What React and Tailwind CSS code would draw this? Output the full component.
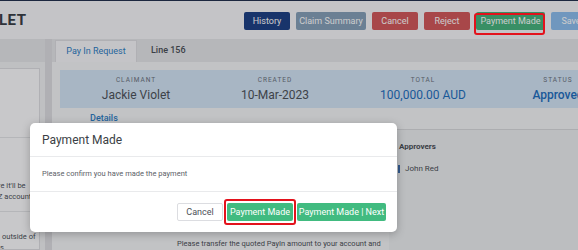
import React from "react";

const HeaderButton = ({ label, className }) => (
  <button
    className={`h-[18px] text-[9px] leading-none text-white rounded-[2px] shrink-0 whitespace-nowrap ${className}`}
  >
    {label}
  </button>
);

const Stat = ({ label, value, valueClass }) => (
  <div className="flex flex-col items-center">
    <span className="text-[6.5px] tracking-[1px] text-[#6b7280] leading-none">{label}</span>
    <span className={`mt-[6px] text-[12px] leading-none whitespace-nowrap ${valueClass}`}>{value}</span>
  </div>
);

const App = () => {
  return (
    <div
      className="relative w-[578px] h-[250px] overflow-hidden bg-[#eff0f3]"
      style={{ fontFamily: "Roboto, 'Liberation Sans', sans-serif" }}
    >
      {/* top strip */}
      <div className="h-[1px] bg-[#24314f]" />

      {/* header */}
      <div className="h-[38px] flex items-center bg-[#f5f6f9]">
        <div className="w-[245px] shrink-0 text-[15px] font-bold text-[#3a3f47] -ml-[1px] tracking-[0.5px]">LET</div>
        <div className="flex items-center gap-[6px] pt-[10px] pb-[8px] shrink-0">
          <HeaderButton label="History" className="w-[46px] bg-[#1f4286]" />
          <HeaderButton label="Claim Summary" className="w-[70px] bg-[#86a0ba]" />
          <HeaderButton label="Cancel" className="w-[46px] bg-[#d3595c]" />
          <HeaderButton label="Reject" className="w-[46px] bg-[#d3595c]" />
          <HeaderButton label="Payment Made" className="w-[69px] bg-[#48b37f]" />
          <HeaderButton label="Save" className="w-[40px] bg-[#8cbdee]" />
        </div>
      </div>

      {/* body */}
      <div className="flex h-[211px]">
        {/* left column */}
        <div className="w-[45px] shrink-0 flex flex-col">
          <div className="h-[23px] shrink-0 bg-[#e4e5e9]" />
          <div className="mt-[6px] mr-[5px] flex-1 min-h-0 overflow-hidden bg-[#fbfbfd] border-y border-r border-[#dcdde1]">
            <div className="h-[69px] border-b border-[#e3e4e8]" />
            <div className="pt-[42px] text-[7.5px] leading-[11px] text-[#4b5058] whitespace-nowrap">
              <div className="-ml-[2px]">re it'll be</div>
              <div className="-ml-[2px]">Z account</div>
            </div>
            <div className="mt-[9px] border-t border-[#e3e4e8] pt-[19px] text-[7.5px] leading-[11px] text-[#4b5058] whitespace-nowrap">
              <div className="ml-[2px]">outside of</div>
              <div>s</div>
            </div>
          </div>
        </div>

        {/* gutter */}
        <div className="w-[7px] shrink-0 bg-[#dcdde1]" />

        {/* main */}
        <div className="flex-1 flex flex-col min-w-0 overflow-hidden">
          <div className="h-[23px] shrink-0 bg-[#e4e5e9] flex items-end pl-[3px]">
            <div className="h-[22px] w-[82px] bg-[#f5f6f9] border-t border-x border-[#dcdde1] flex items-center justify-center text-[9px] text-[#2f7dc4]">
              Pay In Request
            </div>
            <div className="h-[22px] px-[14px] flex items-center text-[9px] font-medium text-[#4b5058]">Line 156</div>
          </div>

          <div className="flex-1 bg-[#f3f4f7] flex flex-col">
            <div className="mt-[8px] ml-[8px] w-[548px] h-[38px] shrink-0 bg-[#d3e4f5] grid grid-cols-[152px_126px_170px_100px] items-center">
              <Stat label="CLAIMANT" value="Jackie Violet" valueClass="text-[#4e535b]" />
              <Stat label="CREATED" value="10-Mar-2023" valueClass="text-[#4e535b]" />
              <Stat label="TOTAL" value="100,000.00 AUD" valueClass="text-[#1f6fc0]" />
              <Stat label="STATUS" value="Approved" valueClass="font-medium text-[#1f6fc0]" />
            </div>
            <div className="h-[21px] shrink-0 pt-[5px] pl-[38px] text-[9px] leading-[11px] font-medium text-[#2f7dc4]">Details</div>

            <div className="flex-1 flex">
              <div className="w-[337px] shrink-0 pt-[110px] pl-[125px] text-[7.5px] leading-[10px] text-[#4b5058] whitespace-nowrap">
                Please transfer the quoted PayIn amount to your account and
              </div>
              <div className="flex-1 bg-[#eceef1] border-t border-[#d8d9dd] pt-[12px] pl-[10px]">
                <div className="text-[8px] leading-[10px] font-bold text-[#4b5058]">Approvers</div>
                <div className="mt-[12px] flex items-center gap-[5px] -ml-[1px]">
                  <span className="w-[2px] h-[8px] bg-[#3f6fae]" />
                  <span className="text-[8px] leading-[10px] text-[#4b5058]">John Red</span>
                </div>
              </div>
            </div>
          </div>
        </div>
      </div>

      {/* overlay */}
      <div className="absolute inset-0 bg-black/20" />

      {/* red annotation around header button */}
      <div className="absolute left-[474px] top-[13px] w-[71px] h-[22px] border-2 border-[#e3121c] rounded-[3px]" />

      {/* modal */}
      <div className="absolute left-[30px] top-[123px] w-[367px] bg-white rounded-[5px] shadow-[0_2px_8px_rgba(0,0,0,0.25)]">
        <div className="h-[34px] px-[12px] flex items-center border-b border-[#e9eaec]">
          <span className="text-[12px] text-[#3b3f45]">Payment Made</span>
        </div>
        <div className="h-[35px] px-[12px] flex items-center border-b border-[#e9eaec]">
          <span className="text-[7.5px] text-[#5c6168]">Please confirm you have made the payment</span>
        </div>
        <div className="h-[40px] flex items-center justify-end gap-[4px] pr-[11px]">
          <button className="h-[18px] w-[46px] bg-white border border-[#dcdde1] rounded-[2px] text-[9px] leading-none text-[#4b5058]">
            Cancel
          </button>
          <div className="relative flex">
            <button className="h-[18px] w-[66px] bg-[#41bb80] rounded-[2px] text-[9px] leading-none text-white whitespace-nowrap">
              Payment Made
            </button>
            <div className="absolute -left-[3px] -top-[4px] w-[72px] h-[26px] border-2 border-[#e3121c] rounded-[3px]" />
          </div>
          <button className="h-[18px] w-[89px] bg-[#41bb80] rounded-[2px] text-[9px] leading-none text-white whitespace-nowrap">
            Payment Made | Next
          </button>
        </div>
      </div>
    </div>
  );
};

export default App;
